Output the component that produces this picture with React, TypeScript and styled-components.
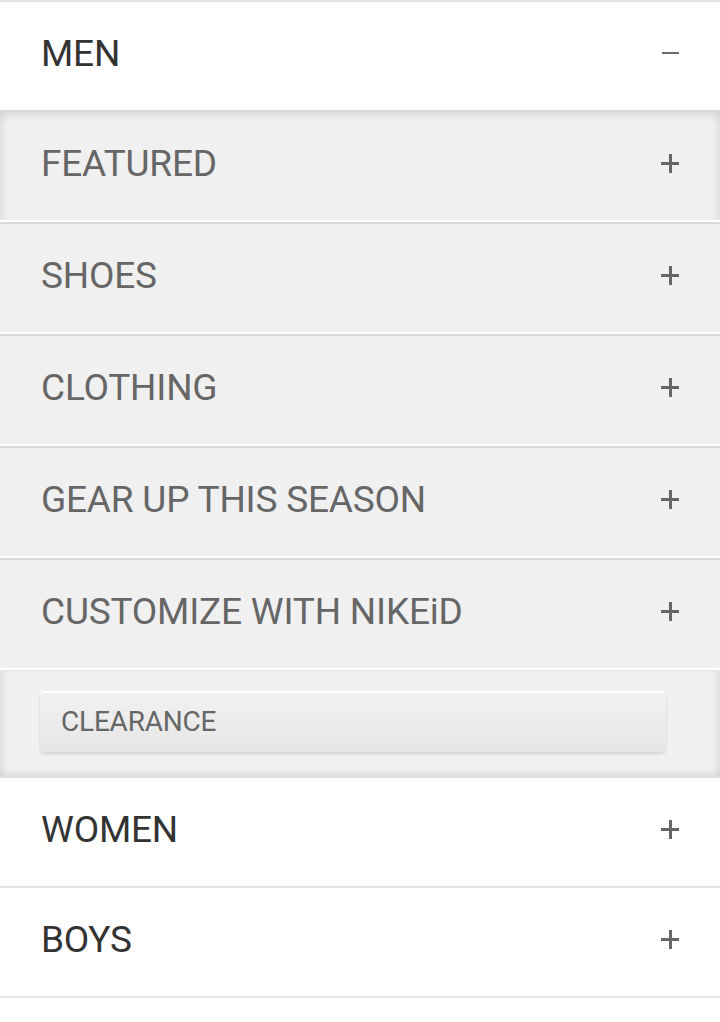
import React from "react";
import styled, { createGlobalStyle, css } from "styled-components";

const Global = createGlobalStyle`
  html, body { margin: 0; padding: 0; background: #ffffff; }
  body { font-family: Roboto, "Noto Sans", "Liberation Sans", sans-serif; }
`;

const Nav = styled.nav`
  border-top: 2px solid #e4e4e4;
  background: #ffffff;
`;

const TopRow = styled.div<{ $last?: boolean }>`
  height: 102px;
  display: flex;
  align-items: center;
  justify-content: space-between;
  padding: 0 41px 6px 41px;
  background: #ffffff;
  border-bottom: ${(p) => (p.$last ? "none" : "2px solid #e4e4e4")};
`;

const TopLabel = styled.span`
  font-size: 37px;
  color: #333333;
  letter-spacing: -0.2px;
  line-height: 1;
`;

const SubList = styled.div`
  background: #f0f0f0;
`;

const SubRow = styled.div<{ $first?: boolean }>`
  height: 102px;
  padding: 0 41px 6px 41px;
  display: flex;
  align-items: center;
  justify-content: space-between;
  background: #f0f0f0;
  border-top: 2px solid ${(p) => (p.$first ? "#dadada" : "#d9d9d9")};
  border-bottom: 2px solid #ffffff;
  ${(p) =>
    p.$first &&
    css`
      box-shadow: inset 0 10px 8px -6px rgba(0, 0, 0, 0.09),
        inset 7px 0 6px -4px rgba(0, 0, 0, 0.07),
        inset -7px 0 6px -4px rgba(0, 0, 0, 0.07);
    `}
`;

const SubLabel = styled.span`
  font-size: 37px;
  color: #666666;
  letter-spacing: -0.2px;
  line-height: 1;
`;

const ClearanceSection = styled.div`
  background: #f0f0f0;
  border-top: 1px solid #e2e2e2;
  border-bottom: 2px solid #dedede;
  padding: 20px 54px 24px 40px;
  box-shadow: inset 0 -9px 8px -6px rgba(0, 0, 0, 0.08),
    inset 7px 0 6px -4px rgba(0, 0, 0, 0.07),
    inset -7px 0 6px -4px rgba(0, 0, 0, 0.07);
`;

const ClearanceButton = styled.div`
  height: 57px;
  display: flex;
  align-items: center;
  padding: 0 21px 2px 21px;
  border-top: 2px solid #ffffff;
  border-radius: 5px;
  background: linear-gradient(#f1f1f1, #e6e6e6);
  box-shadow: 0 2px 3px rgba(0, 0, 0, 0.12);
`;

const ClearanceLabel = styled.span`
  font-size: 28px;
  color: #666666;
  letter-spacing: -0.2px;
  line-height: 1;
`;

const Toggle = styled.span<{ $open?: boolean }>`
  position: relative;
  width: 18px;
  height: 19px;
  flex: none;
  &::before {
    content: "";
    position: absolute;
    left: 0;
    right: 0;
    top: 8px;
    height: 3px;
    background: #666666;
  }
  ${(p) =>
    !p.$open &&
    css`
      &::after {
        content: "";
        position: absolute;
        top: 0;
        bottom: 0;
        left: 8px;
        width: 3px;
        background: #666666;
      }
    `}
  ${(p) =>
    p.$open &&
    css`
      &::before {
        left: 1px;
        height: 2.5px;
        background: #6a6a6a;
      }
    `}
`;

const subItems = [
  "FEATURED",
  "SHOES",
  "CLOTHING",
  "GEAR UP THIS SEASON",
  "CUSTOMIZE WITH NIKEiD",
];

export default function App() {
  return (
    <>
      <Global />
      <Nav>
        <TopRow $last>
          <TopLabel>MEN</TopLabel>
          <Toggle $open />
        </TopRow>
        <SubList>
          {subItems.map((label, i) => (
            <SubRow key={label} $first={i === 0}>
              <SubLabel>{label}</SubLabel>
              <Toggle />
            </SubRow>
          ))}
          <ClearanceSection>
            <ClearanceButton>
              <ClearanceLabel>CLEARANCE</ClearanceLabel>
            </ClearanceButton>
          </ClearanceSection>
        </SubList>
        <TopRow>
          <TopLabel>WOMEN</TopLabel>
          <Toggle />
        </TopRow>
        <TopRow>
          <TopLabel>BOYS</TopLabel>
          <Toggle />
        </TopRow>
      </Nav>
    </>
  );
}
